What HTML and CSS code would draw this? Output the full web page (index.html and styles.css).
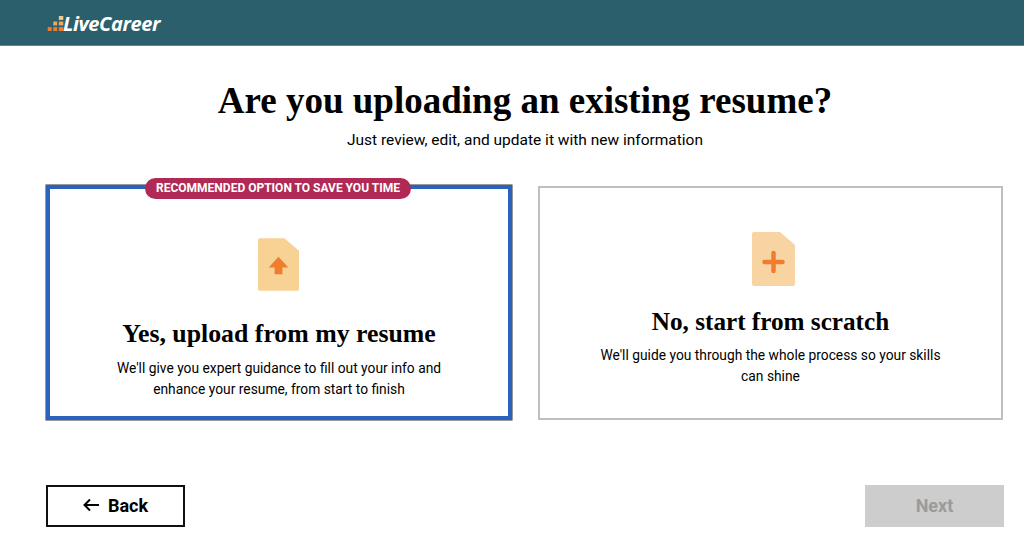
FILE: index.html
```html
<!DOCTYPE html>
<html lang="en">
<head>
    <meta charset="UTF-8">
    <title>Are you uploading an existing resume? - LiveCareer</title>
    <link rel="stylesheet" href="styles.css">
</head>
<body>
    <header class="topbar">
        <div class="logo">
            <svg class="logo-mark" width="17" height="15" viewBox="0 1 14 13.5">
                <rect x="0" y="11" width="3.5" height="3.5" fill="#f07c2e"/>
                <rect x="5" y="11" width="3.5" height="3.5" fill="#f07c2e"/>
                <rect x="10" y="11" width="4" height="3.5" fill="#f07c2e"/>
                <rect x="5" y="6" width="3.5" height="3.5" fill="#f2a65a"/>
                <rect x="10" y="6" width="4" height="3.5" fill="#f2a65a"/>
                <rect x="10" y="1" width="4" height="3.5" fill="#f5c987"/>
            </svg>
            <span class="logo-text">LiveCareer</span>
        </div>
    </header>

    <main class="content">
        <h1 class="title">Are you uploading an existing resume?</h1>
        <p class="subtitle">Just review, edit, and update it with new information</p>

        <div class="options">
            <div class="card card-selected">
                <span class="badge">RECOMMENDED OPTION TO SAVE YOU TIME</span>
                <svg class="file-icon" width="41" height="53" viewBox="0 0 42 54">
                    <path d="M2 0H27L42 13V52a2 2 0 0 1-2 2H2a2 2 0 0 1-2-2V2a2 2 0 0 1 2-2Z" fill="#f8d195"/>
                    <path d="M21 19L31 30H25V37H17V30H11Z" fill="#f07c2e"/>
                </svg>
                <h2 class="card-title">Yes, upload from my resume</h2>
                <p class="card-text">We'll give you expert guidance to fill out your info and<br>enhance your resume, from start to finish</p>
            </div>
            <div class="card card-plain">
                <svg class="file-icon" width="43" height="54" viewBox="0 0 43 54">
                    <path d="M2 0H28L43 13V52a2 2 0 0 1-2 2H2a2 2 0 0 1-2-2V2a2 2 0 0 1 2-2Z" fill="#f9d4a3"/>
                    <path d="M21.500 21V39M12.500 30H30.500" stroke="#f07c2e" stroke-width="4.500" stroke-linecap="round" fill="none"/>
                </svg>
                <h2 class="card-title">No, start from scratch</h2>
                <p class="card-text">We'll guide you through the whole process so your skills<br>can shine</p>
            </div>
        </div>

        <div class="actions">
            <button class="btn btn-back" type="button">
                <svg width="16" height="14" viewBox="0 0 16 14">
                    <path d="M16 7H1.500M7 1.500L1.500 7L7 12.500" stroke="#000" stroke-width="2" fill="none"/>
                </svg>
                Back
            </button>
            <button class="btn btn-next" type="button">Next</button>
        </div>
    </main>
</body>
</html>
```

FILE: styles.css
```css
* {
    box-sizing: border-box;
}

body {
    margin: 0;
    font-family: 'Roboto', sans-serif;
    color: #000;
    background-color: #fff;
}

.topbar {
    height: 46px;
    padding: 10px 0 0 47px;
    background-color: #2a5f6b;
    border-bottom: 1px solid #5b8790;
}

.logo {
    display: flex;
    align-items: center;
}

.logo-mark {
    margin-bottom: 2px;
}

.logo-text {
    margin-left: -1px;
    font-family: 'Open Sans', sans-serif;
    font-size: 20px;
    font-weight: 700;
    font-style: italic;
    letter-spacing: -0.4px;
    line-height: 28px;
    color: #fff;
}

.content {
    padding: 0 20px 0 46px;
}

.title {
    margin: 33px 0 0;
    font-family: 'Liberation Serif', serif;
    font-size: 37px;
    line-height: 44px;
    font-weight: 700;
    text-align: center;
}

.subtitle {
    margin: 5px 0 0;
    font-size: 15.5px;
    line-height: 24px;
    text-align: center;
}

.options {
    display: flex;
    align-items: center;
    gap: 26px;
    margin-top: 33px;
}

.card {
    position: relative;
    display: flex;
    flex-direction: column;
    align-items: center;
    text-align: center;
}

.card-selected {
    width: 466px;
    height: 235px;
    padding: 49px 2px 0 0;
    border: 4px solid #2b62bd;
    box-shadow: inset 0 0 0 1px #fff, 0 0 0 0.5px #333;
}

.card-selected .card-title {
    font-size: 25.8px;
}

.card-selected .card-title,
.card-selected .card-text {
    margin-right: -2px;
}

.card-selected .card-text {
    margin-top: 8px;
}

.card-plain {
    width: 465px;
    height: 234px;
    padding-top: 44px;
    border: 2px solid #bfbfbf;
}

.card-plain .file-icon {
    margin-left: 5px;
}

.card-plain .card-title {
    margin-top: 20px;
}

.badge {
    position: absolute;
    top: -11px;
    left: 95px;
    width: 266px;
    height: 21px;
    border-radius: 11px;
    font-size: 12px;
    font-weight: 700;
    line-height: 21px;
    color: #fff;
    background-color: #b02a55;
}

.file-icon {
    display: block;
}

.card-title {
    margin: 27px 0 0;
    font-family: 'Liberation Serif', serif;
    font-size: 25.2px;
    line-height: 32px;
    font-weight: 700;
}

.card-text {
    margin: 7px 0 0;
    font-size: 13.8px;
    line-height: 21px;
}

.actions {
    display: flex;
    justify-content: space-between;
    margin-top: 65px;
}

.btn {
    display: flex;
    align-items: center;
    justify-content: center;
    gap: 9px;
    width: 139px;
    height: 42px;
    padding: 0 0 2px;
    font-family: 'Roboto', sans-serif;
    font-size: 18px;
    font-weight: 700;
}

.btn-back {
    color: #000;
    background-color: #fff;
    border: 2px solid #111;
}

.btn-next {
    color: #9b9b9b;
    background-color: #cdcdcd;
    border: none;
}
```
